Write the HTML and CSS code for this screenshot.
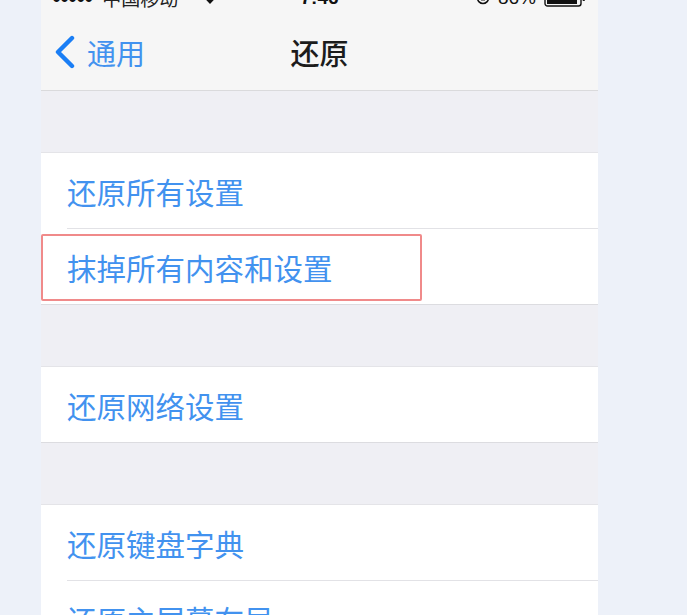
FILE: index.html
```html
<!DOCTYPE html>
<html lang="zh">
<head>
<meta charset="utf-8">
<title>还原</title>
<link rel="stylesheet" href="styles.css">
</head>
<body>
<div class="page">
  <div class="phone">
    <div class="status">
      <div class="status-left">
        <span class="dots">●●●●●</span>
        <span class="carrier">中国移动</span>
        <svg class="wifi" width="16" height="12" viewBox="0 0 16 12"><path d="M8 12 L0.5 4 A11 11 0 0 1 15.5 4 Z" fill="#111"/></svg>
      </div>
      <div class="status-time">7:46</div>
      <div class="status-right">
        <svg class="lock" width="14" height="14" viewBox="0 0 14 14"><circle cx="7" cy="7" r="5.5" fill="none" stroke="#111" stroke-width="1.6"/><rect x="5" y="6" width="4" height="3.5" fill="#111"/></svg>
        <span class="pct">86%</span>
        <svg class="battery" width="42" height="18" viewBox="0 0 42 18"><rect x="1" y="1" width="36" height="16" rx="2.5" fill="none" stroke="#111" stroke-width="1.4"/><rect x="3" y="3" width="30" height="12" fill="#111"/><rect x="38.5" y="6" width="2.5" height="6" rx="1" fill="#111"/></svg>
      </div>
    </div>
    <div class="navbar">
      <div class="back">
        <svg class="chev" width="22" height="34" viewBox="0 0 22 34"><polyline points="18,3 4,17 18,31" fill="none" stroke="#1a7ef5" stroke-width="4.4" stroke-linecap="round" stroke-linejoin="round"/></svg>
        <span class="back-label">通用</span>
      </div>
      <div class="title">还原</div>
    </div>
    <div class="gap"></div>
    <div class="group">
      <div class="row"><span class="label">还原所有设置</span></div>
      <div class="row highlighted"><span class="label">抹掉所有内容和设置</span><span class="mark"></span></div>
    </div>
    <div class="gap"></div>
    <div class="group">
      <div class="row"><span class="label">还原网络设置</span></div>
    </div>
    <div class="gap"></div>
    <div class="group">
      <div class="row"><span class="label">还原键盘字典</span></div>
      <div class="row"><span class="label">还原主屏幕布局</span></div>
    </div>
  </div>
</div>
</body>
</html>
```
FILE: styles.css
```css
html, body {
  margin: 0;
  padding: 0;
  background: #edf1f9;
  height: 615px;
  overflow: hidden;
}
.page {
  display: flex;
  padding-left: 41px;
  font-family: "Noto Sans CJK SC", "Noto Sans", sans-serif;
}
.phone {
  width: 557px;
  background: #efeff4;
}
.status {
  margin-top: -19px;
  height: 33px;
  background: #f6f6f6;
  display: flex;
  align-items: center;
  font-family: "Liberation Sans", "Noto Sans CJK SC", sans-serif;
  font-size: 19px;
  color: #111;
  position: relative;
}
.status-left {
  display: flex;
  align-items: center;
  gap: 10px;
  padding-left: 11px;
  width: 220px;
}
.dots {
  font-size: 15px;
  letter-spacing: -1px;
}
.carrier {
  font-family: "Noto Sans CJK SC", sans-serif;
  font-size: 19px;
  color: #222;
}
.wifi { margin-left: 14px; }
.status-time {
  position: absolute;
  left: 0;
  right: 0;
  text-align: center;
  font-weight: bold;
  pointer-events: none;
}
.status-right {
  margin-left: auto;
  display: flex;
  align-items: center;
  gap: 8px;
  padding-right: 12px;
}
.navbar {
  height: 76px;
  background: #f6f6f6;
  border-bottom: 1px solid #dadadc;
  display: flex;
  align-items: center;
  position: relative;
}
.back {
  display: flex;
  align-items: center;
  padding-left: 13px;
  gap: 11px;
  color: #4292ef;
  font-size: 29px;
}
.title {
  position: absolute;
  left: 0;
  right: 0;
  text-align: center;
  font-size: 29px;
  font-weight: 500;
  color: #1c1c1c;
  pointer-events: none;
}
.gap {
  height: 61px;
}
.group {
  background: #fff;
  border-top: 1px solid #e4e4e8;
  border-bottom: 1px solid #dcdce0;
}
.row {
  height: 75px;
  margin-left: 26px;
  display: flex;
  align-items: center;
  position: relative;
}
.row + .row {
  border-top: 1px solid #e2e2e6;
}
.label {
  color: #4292ef;
  font-size: 29.5px;
}
.highlighted .mark {
  position: absolute;
  left: -26px;
  top: 5px;
  width: 377px;
  height: 63px;
  border: 2px solid #f08a8a;
  border-radius: 2px;
}
```
